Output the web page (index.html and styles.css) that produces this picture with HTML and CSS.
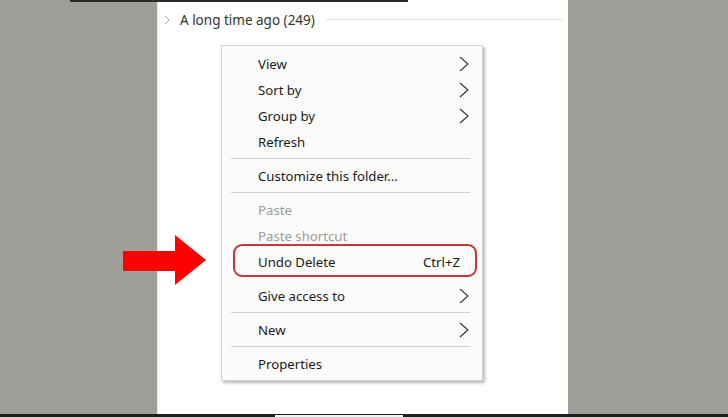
FILE: index.html
```html
<!DOCTYPE html>
<html lang="en">
<head>
    <meta charset="UTF-8">
    <meta name="viewport" content="width=device-width, initial-scale=1.0">
    <title>Undo Delete</title>
    <link rel="stylesheet" href="styles.css">
</head>
<body>
    <div class="screen">
        <div class="side"></div>
        <div class="panel">
            <div class="group-header">
                <svg class="group-chevron" width="6" height="10" viewBox="0 0 6 10"><path d="M1 1 L5 5 L1 9" fill="none" stroke="#a8a8a8" stroke-width="1"/></svg>
                <span class="group-title">A long time ago (249)</span>
                <span class="group-line"></span>
            </div>

            <div class="menu">
                <div class="item">View <svg class="sub" width="10" height="16" viewBox="0 0 10 16"><path d="M1 1 L9 8 L1 15" fill="none" stroke="#3a3a3a" stroke-width="1.2"/></svg></div>
                <div class="item">Sort by <svg class="sub" width="10" height="16" viewBox="0 0 10 16"><path d="M1 1 L9 8 L1 15" fill="none" stroke="#3a3a3a" stroke-width="1.2"/></svg></div>
                <div class="item">Group by <svg class="sub" width="10" height="16" viewBox="0 0 10 16"><path d="M1 1 L9 8 L1 15" fill="none" stroke="#3a3a3a" stroke-width="1.2"/></svg></div>
                <div class="item">Refresh</div>
                <div class="separator"></div>
                <div class="item">Customize this folder...</div>
                <div class="separator"></div>
                <div class="item disabled">Paste</div>
                <div class="item disabled">Paste shortcut</div>
                <div class="item highlight">Undo Delete <span class="shortcut">Ctrl+Z</span></div>
                <div class="gap"></div>
                <div class="item">Give access to <svg class="sub" width="10" height="16" viewBox="0 0 10 16"><path d="M1 1 L9 8 L1 15" fill="none" stroke="#3a3a3a" stroke-width="1.2"/></svg></div>
                <div class="separator"></div>
                <div class="item">New <svg class="sub" width="10" height="16" viewBox="0 0 10 16"><path d="M1 1 L9 8 L1 15" fill="none" stroke="#3a3a3a" stroke-width="1.2"/></svg></div>
                <div class="separator"></div>
                <div class="item">Properties</div>
            </div>
        </div>
        <div class="side"></div>

        <svg class="arrow" width="86" height="54" viewBox="0 0 86 54"><polygon points="1,17 53,17 53,1 84,26 53,51 53,37 1,37" fill="#ff0000"/></svg>
        <div class="strip-top"></div>
        <div class="strip-bottom"><span class="strip-gap"></span></div>
    </div>
</body>
</html>
```

FILE: styles.css
```css
:root {
    --backdrop: #9f9e98;
    --panel: #ffffff;
    --menu-bg: #fbfbf9;
    --text: #1a1a1a;
    --disabled: #9c9c9c;
    --rule: #cfcfcf;
    --mark: #c7343a;
}

* {
    box-sizing: border-box;
    margin: 0;
    padding: 0;
}

body {
    background-color: var(--backdrop);
    font-family: 'Noto Sans', Arial, sans-serif;
    overflow: hidden;
}

.screen {
    position: relative;
    display: flex;
    width: 728px;
    height: 417px;
    overflow: hidden;
}

.side {
    flex: 1;
    background-color: var(--backdrop);
}

.side:first-child {
    flex: 0 0 157px;
}

.panel {
    flex: 0 0 411px;
    background-color: var(--panel);
    border-left: 1px solid #ececec;
}

.group-header {
    display: flex;
    align-items: center;
    height: 20px;
    margin-top: 10px;
    padding-left: 6px;
}

.group-chevron {
    margin-right: 10px;
}

.group-title {
    font-size: 13.5px;
    color: #333333;
    white-space: nowrap;
}

.group-line {
    flex: 1;
    height: 1px;
    margin: 0 4px 2px 11px;
    background-color: #e6e6e6;
}

.menu {
    width: 262px;
    margin: 15px 0 0 63px;
    padding: 5px 0 3px;
    background-color: var(--menu-bg);
    border: 1px solid #d4d4d2;
    box-shadow: 2px 2px 3px rgba(0, 0, 0, 0.28);
}

.item {
    position: relative;
    display: flex;
    align-items: center;
    justify-content: space-between;
    height: 26px;
    padding: 0 13px 0 36px;
    font-size: 13.2px;
    color: var(--text);
}

.item.disabled {
    color: var(--disabled);
}

.shortcut {
    margin-right: 9px;
}

.highlight::after {
    content: "";
    position: absolute;
    top: -5px;
    bottom: -2px;
    left: 11px;
    right: 5px;
    border: 2px solid var(--mark);
    border-radius: 9px;
}

.separator {
    height: 1px;
    margin: 3px 12px 4px 9px;
    background-color: var(--rule);
}

.gap {
    height: 8px;
}

.arrow {
    position: absolute;
    left: 122px;
    top: 234px;
}

.strip-top {
    position: absolute;
    top: 0;
    left: 70px;
    width: 338px;
    height: 2px;
    background-color: #2a2a2a;
}

.strip-bottom {
    position: absolute;
    left: 0;
    right: 0;
    bottom: 0;
    height: 3px;
    background-color: #1e1e1e;
}

.strip-gap {
    display: block;
    width: 128px;
    height: 2px;
    margin: 1px 0 0 275px;
    background-color: #f2f2f2;
}
```
